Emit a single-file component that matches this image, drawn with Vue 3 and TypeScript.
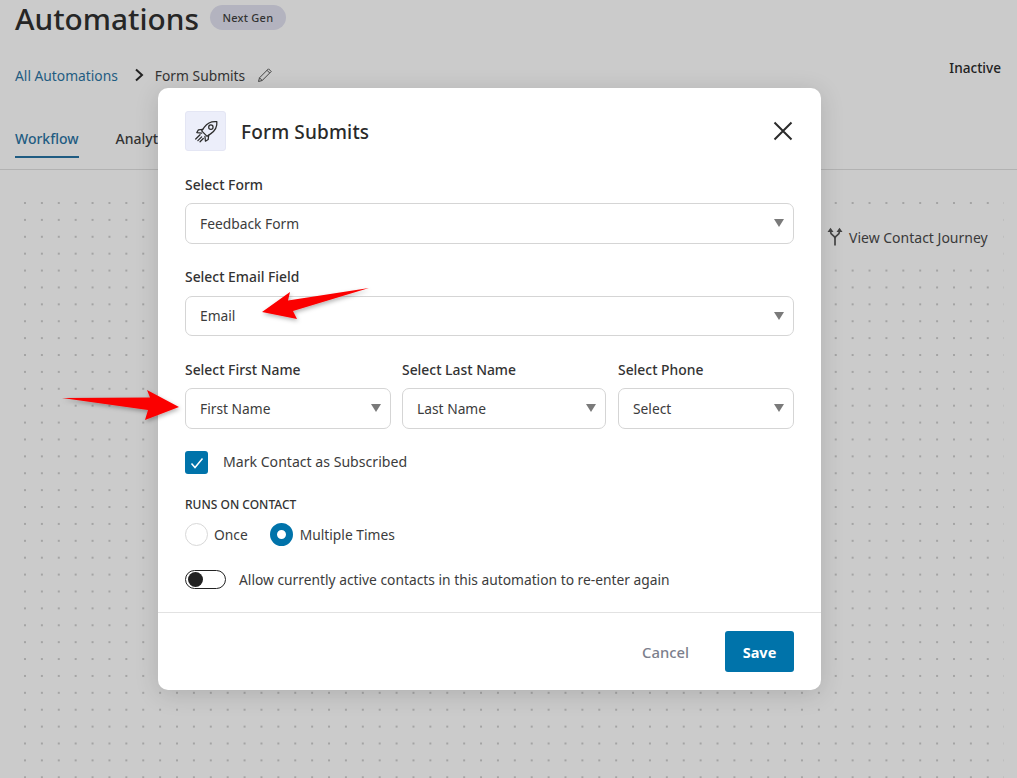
<script setup lang="ts">
const tabs = ['Workflow', 'Analytics']
const nameFields = [
  { label: 'Select First Name', value: 'First Name', cls: 'first' },
  { label: 'Select Last Name', value: 'Last Name', cls: 'last' },
  { label: 'Select Phone', value: 'Select', cls: 'phone' },
]
</script>

<template>
  <div class="page">
    <header class="top">
      <div class="title-row">
        <h1>Automations</h1>
        <span class="badge">Next Gen</span>
      </div>
      <div class="crumb-row">
        <a class="crumb-link">All Automations</a>
        <svg class="chev" width="10" height="14" viewBox="0 0 10 14"><path d="M2 1.5 8 7l-6 5.5" fill="none" stroke="#222" stroke-width="2"/></svg>
        <span class="crumb-cur">Form Submits</span>
        <svg class="pencil" width="16" height="16" viewBox="0 0 16 16" fill="none" stroke="#444" stroke-width="1"><path d="M11.5 1.8 14.2 4.5 5.2 13.5 1.5 14.5 2.5 10.8Z"/><path d="M10 3.3 12.7 6M2.5 10.8l2.7 2.7"/></svg>
        <span class="status">Inactive</span>
      </div>
      <nav class="tabs">
        <span v-for="(t, i) in tabs" :key="t" class="tab" :class="{ active: i === 0 }">{{ t }}</span>
      </nav>
    </header>

    <section class="canvas">
      <div class="journey">
        <svg width="18" height="20" viewBox="0 0 18 20" fill="none" stroke="#444" stroke-width="1.7">
          <path d="M9 18.500V11.500Q9 9.500 6.500 8 4.500 7 4.500 4M9 11.500Q9 9.500 11.500 8 13.500 7 13.500 4"/>
          <path d="M4.500 .8 1.500 5H7.500ZM13.500 .8 10.500 5H16.500Z" fill="#444" stroke="none"/>
        </svg>
        <span>View Contact Journey</span>
      </div>
    </section>

    <div class="modal">
      <div class="modal-head">
        <div class="icon-box">
          <svg class="rocket" width="26" height="26" viewBox="0 0 24 24" fill="none" stroke="#2b2b2b" stroke-width="1.150" stroke-linejoin="round" stroke-linecap="round">
            <path d="M22 2.500c-5-.5-9 1.500-11.500 5L8 11l5 5 3.500-2.500C20 11 22.500 7.500 22 2.500Z"/>
            <circle cx="16.500" cy="7.500" r="2"/>
            <path d="M9 9.500 5 10l-1.500 2.500L8 13M14.500 15l-.5 4-2.500 1.500L11 16"/>
            <path d="M6.500 14.500 2.500 18.500M8 16.500l-3.500 3.500M9.500 18 6.500 21"/>
          </svg>
        </div>
        <h2>Form Submits</h2>
        <svg class="close" width="20" height="20" viewBox="0 0 20 20"><path d="M1.500 1.500l17 17M18.500 1.500l-17 17" stroke="#2b2b2b" stroke-width="2" fill="none"/></svg>
      </div>

      <div class="modal-body">
        <div class="field form-field">
          <label>Select Form</label>
          <div class="select tall"><span>Feedback Form</span><i class="caret"></i></div>
        </div>
        <div class="field email-field">
          <label>Select Email Field</label>
          <div class="select short"><span>Email</span><i class="caret"></i></div>
        </div>
        <div class="name-row">
          <div v-for="f in nameFields" :key="f.cls" class="field" :class="f.cls">
            <label>{{ f.label }}</label>
            <div class="select tall"><span>{{ f.value }}</span><i class="caret"></i></div>
          </div>
        </div>
        <div class="check-row">
          <span class="checkbox">
            <svg width="14" height="12" viewBox="0 0 14 12"><path d="M1.500 6.500 5 10.500 12.500 1.500" fill="none" stroke="#fff" stroke-width="1.500"/></svg>
          </span>
          <span class="check-text">Mark Contact as Subscribed</span>
        </div>
        <div class="runs-label">RUNS ON CONTACT</div>
        <div class="radio-row">
          <span class="radio"></span><span class="radio-text">Once</span>
          <span class="radio on"></span><span>Multiple Times</span>
        </div>
        <div class="toggle-row">
          <span class="toggle"><i></i></span>
          <span>Allow currently active contacts in this automation to re-enter again</span>
        </div>
      </div>

      <div class="modal-foot">
        <span class="cancel">Cancel</span>
        <span class="save">Save</span>
      </div>
    </div>

    <svg class="arrows" width="1017" height="778" viewBox="0 0 1017 778">
      <defs>
        <filter id="ds" x="-20%" y="-40%" width="140%" height="200%">
          <feDropShadow dx="1" dy="2" stdDeviation="2" flood-color="#000" flood-opacity=".3"/>
        </filter>
      </defs>
      <path d="M369 288 288 300.500 290 292 262 312 297 319 293 311Z" fill="#fb0000" filter="url(#ds)"/>
      <path d="M62 398 150 397.500 147 390 179 407 145 420 148 410Z" fill="#fb0000" filter="url(#ds)"/>
    </svg>
  </div>
</template>

<style>
html, body { margin: 0; background: #cbcbcb; }
</style>

<style scoped>
.page {
  position: relative;
  width: 1017px;
  height: 778px;
  overflow: hidden;
  background: #cbcbcb;
  font-family: "Noto Sans", "Open Sans", sans-serif;
  font-size: 14px;
  color: #2f2f2f;
}
.top { padding: 0 15px; height: 170px; box-sizing: border-box; border-bottom: 1px solid #b2b2b2; }
.title-row { display: flex; align-items: center; height: 37px; gap: 11px; }
h1 { margin: 0; font-size: 29.800px; font-weight: 500; line-height: 37px; color: #262626; }
.badge {
  background: #b3b3bf; color: #333; font-size: 11px; line-height: 25px;
  padding: 0 12.500px; border-radius: 13px; font-weight: 500; letter-spacing: .25px; margin-bottom: 2px;
}
.crumb-row { display: flex; align-items: center; margin-top: 26px; height: 24px; position: relative; font-size: 13.800px; }
.crumb-link { color: #1f5c82; }
.chev { margin: 0 11px 0 16px; }
.crumb-cur { color: #333; }
.pencil { margin-left: 12px; }
.status { position: absolute; right: 1px; top: -5px; color: #222; font-weight: 500; font-size: 13.600px; }
.tabs { display: flex; gap: 37px; margin-top: 39px; height: 32px; }
.tab { font-weight: 500; color: #333; height: 32px; line-height: 26px; box-sizing: border-box; }
.tab.active { color: #1f5c82; border-bottom: 2px solid #1f5c82; }
.canvas {
  position: relative;
  height: 576px;
  margin: 32px 13px 0 24px;
  background-image: radial-gradient(circle at 1px 1px, #a3a3a3 .7px, transparent 1px);
  background-size: 16.900px 16.900px;
}
.journey {
  position: absolute; left: 801px; top: 7px; width: 167px; height: 56px;
  display: flex; align-items: center; gap: 5px; color: #3a3a3a;
  background: #cbcbcb; padding-left: 1px; box-sizing: border-box;
}
.modal {
  position: absolute; left: 158px; top: 88px; width: 663px; height: 602px;
  background: #fff; border-radius: 10px;
  box-shadow: 0 4px 24px rgba(0, 0, 0, .14);
  display: flex; flex-direction: column;
}
.modal-head { display: flex; align-items: center; padding: 23px 28px 0 27px; height: 40px; }
.icon-box {
  width: 41px; height: 40px; border-radius: 3px; background: #eceefa;
  display: flex; align-items: center; justify-content: center; border: 1px solid #e4e6f4; box-sizing: border-box;
}
.rocket { margin-top: 1px; }
h2 { margin: 2px 0 0 15px; flex: 1; font-size: 19px; font-weight: 500; color: #2a2a2a; letter-spacing: .15px; }
.modal-body { padding: 0 27px; flex: 1; font-size: 14px; }
.field label { display: block; line-height: 20px; font-weight: 500; color: #333; font-size: 13.900px; }
.form-field { margin-top: 24px; }
.form-field label { margin-bottom: 8px; }
.email-field { margin-top: 23px; }
.email-field label { margin-bottom: 9px; }
.select {
  position: relative; height: 40px; box-sizing: border-box; font-size: 13.800px;
  border: 1px solid #d5d5d5; border-radius: 7px;
  display: flex; align-items: center; padding-left: 14px; color: #3c3c3c;
}
.select.tall { height: 41px; }
.select.short { padding-bottom: 2px; }
.caret {
  position: absolute; right: 9px; top: 15px; width: 0; height: 0;
  border-left: 5px solid transparent; border-right: 5px solid transparent; border-top: 8px solid #7a7a7a;
}
.name-row { display: grid; grid-template-columns: 206px 205px 176px; column-gap: 11px; margin-top: 24px; }
.name-row label { margin-bottom: 8px; }
.last { padding-right: 1px; }
.check-row { display: flex; align-items: center; gap: 15px; margin-top: 22px; height: 23px; color: #3c3c3c; }
.check-text { font-size: 14.100px; margin-top: -2px; }
.checkbox {
  width: 23px; height: 23px; border-radius: 3px; background: #0073aa;
  display: flex; align-items: center; justify-content: center;
}
.runs-label { margin-top: 23px; font-size: 12px; line-height: 16px; font-weight: 500; color: #333; }
.radio-row { display: flex; align-items: center; margin-top: 10px; height: 23px; color: #3c3c3c; font-size: 13.800px; }
.radio { width: 23px; height: 23px; border-radius: 50%; border: 1px solid #d8d8d8; box-sizing: border-box; margin-right: 6px; }
.radio-text { margin-right: 22px; }
.radio.on { border: 7px solid #0073aa; background: #fff; margin-right: 7px; }
.toggle-row { display: flex; align-items: center; gap: 13px; margin-top: 24px; height: 19px; color: #3c3c3c; font-size: 13.800px; }
.toggle {
  width: 41px; height: 19px; box-sizing: border-box; border: 1px solid #222; border-radius: 10px;
  display: flex; align-items: center; padding-left: 2px;
}
.toggle i { width: 15px; height: 15px; border-radius: 50%; background: #222; }
.modal-foot {
  border-top: 1px solid #e2e2e2; height: 78px; box-sizing: border-box;
  display: flex; align-items: center; justify-content: flex-end; padding: 0 27px 0 0;
}
.cancel { color: #7c7f8c; font-weight: 500; margin-right: 36px; font-size: 14.800px; }
.save {
  width: 69px; height: 41px; border-radius: 3px; background: #0073aa; color: #fff;
  font-weight: 700; font-size: 14.500px; display: flex; align-items: center; justify-content: center;
}
.arrows { position: absolute; left: 0; top: 0; pointer-events: none; }
</style>
